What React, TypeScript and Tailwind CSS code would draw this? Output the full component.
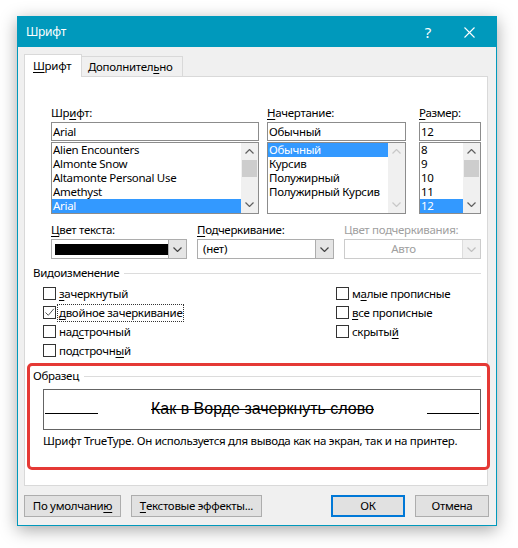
import React from "react";

const fontItems = ["Alien Encounters", "Almonte Snow", "Altamonte Personal Use", "Amethyst", "Arial"];
const styleItems = ["Обычный", "Курсив", "Полужирный", "Полужирный Курсив"];
const sizeItems = ["8", "9", "10", "11", "12"];

function U({ children }: { children: React.ReactNode }) {
  return <span className="underline decoration-1 underline-offset-[2px]">{children}</span>;
}

function Chevron({ up, className = "" }: { up?: boolean; className?: string }) {
  return (
    <svg width="9" height="5" viewBox="0 0 9 5" className={className}>
      <path
        d={up ? "M0.5 4.5 L4.5 0.5 L8.5 4.5" : "M0.5 0.5 L4.5 4.5 L8.5 0.5"}
        fill="none"
        stroke="currentColor"
        strokeWidth="1.2"
      />
    </svg>
  );
}

function TitleBar() {
  return (
    <div className="flex h-[30px] items-center bg-[#0099bc] pl-[8px] text-[12px] text-white">
      <span>Шрифт</span>
      <div className="ml-auto flex items-center">
        <span className="text-[15px]">?</span>
        <svg width="11" height="11" viewBox="0 0 11 11" className="ml-[33px] mr-[21px]">
          <path d="M0.5 0.5 L10.5 10.5 M10.5 0.5 L0.5 10.5" stroke="white" strokeWidth="1.1" />
        </svg>
      </div>
    </div>
  );
}

function Input({ value }: { value: string }) {
  return (
    <div className="mt-[1px] flex h-[19px] items-center border border-[#8c8c8c] bg-white pl-[1px]">
      {value}
    </div>
  );
}

function ScrollBar({ disabled }: { disabled?: boolean }) {
  const arrow = disabled ? "text-[#c8c8c8]" : "text-[#606060]";
  return (
    <div className="flex w-[17px] flex-col items-center bg-[#f0f0f0]">
      <div className={`flex h-[17px] w-full items-center justify-center ${arrow}`}>
        <Chevron up />
      </div>
      {disabled ? null : <div className="h-[17px] w-[15px] bg-[#cdcdcd]" />}
      <div className="flex-1" />
      <div className={`flex h-[17px] w-full items-center justify-center ${arrow}`}>
        <Chevron />
      </div>
    </div>
  );
}

function ListBox({
  items,
  selected,
  disabled,
}: {
  items: string[];
  selected: number;
  disabled?: boolean;
}) {
  return (
    <div className="mt-[1px] flex h-[72px] border border-[#8c8c8c] bg-white">
      <div className="min-w-0 flex-1 overflow-hidden">
        {items.map((item, i) => (
          <div
            key={item}
            className={
              i === selected
                ? "h-[14px] whitespace-nowrap bg-[#3399ff] pl-[1px] leading-[14px] text-white"
                : "h-[14px] whitespace-nowrap pl-[1px] leading-[14px]"
            }
          >
            {item}
          </div>
        ))}
      </div>
      <ScrollBar disabled={disabled} />
    </div>
  );
}

function Combo({
  width,
  children,
  disabled,
}: {
  width: string;
  children: React.ReactNode;
  disabled?: boolean;
}) {
  return (
    <div
      className={`mt-[1px] flex h-[20px] border ${width} ${
        disabled ? "border-[#cccccc] bg-white text-[#a0a0a0]" : "border-[#adadad] bg-white"
      }`}
    >
      <div className={`flex flex-1 items-center ${disabled ? "justify-center" : "pl-[5px]"}`}>{children}</div>
      <div
        className={`flex w-[18px] items-center justify-center border-l ${
          disabled ? "border-[#dddddd] bg-[#f0f0f0] text-[#c0c0c0]" : "border-[#adadad] bg-[#e5e5e5] text-[#444]"
        }`}
      >
        <Chevron />
      </div>
    </div>
  );
}

function GroupTitle({ children, left }: { children: React.ReactNode; left: string }) {
  return (
    <div className={`flex h-[16px] items-center ${left}`}>
      <span>{children}</span>
      <div className="ml-[5px] mr-[6px] h-px flex-1 bg-[#dcdcdc]" />
    </div>
  );
}

function Check({
  children,
  checked,
  focus,
}: {
  children: React.ReactNode;
  checked?: boolean;
  focus?: boolean;
}) {
  return (
    <div className="flex h-[19px] items-center">
      <div className="flex h-[13px] w-[13px] items-center justify-center border border-[#333333] bg-white">
        {checked ? (
          <svg width="11" height="11" viewBox="0 0 11 11">
            <path d="M1.5 5.5 L4.3 8.3 L9.8 1.8" fill="none" stroke="#555" strokeWidth="1" />
          </svg>
        ) : null}
      </div>
      <span
        className={`ml-[1px] h-[18px] whitespace-nowrap border px-[1px] ${
          focus ? "border-dotted border-[#333]" : "border-transparent"
        }`}
      >
        {children}
      </span>
    </div>
  );
}

function Button({ children, width, primary }: { children: React.ReactNode; width: string; primary?: boolean }) {
  return (
    <div
      className={`flex h-[22px] items-center justify-center whitespace-nowrap bg-[#e1e1e1] ${width} ${
        primary ? "border-2 border-[#0078d7]" : "border border-[#adadad]"
      }`}
    >
      {children}
    </div>
  );
}

export default function App() {
  return (
    <div className="h-[548px] w-[518px] bg-white pl-[17px] pt-[16px] font-['Noto_Sans',sans-serif] text-[11.5px] leading-[16px] tracking-[-0.3px] text-black">
      <div className="flex h-[510px] w-[480px] flex-col border border-[#0099bc] bg-[#f0f0f0] shadow-[0_4px_16px_rgba(0,0,0,0.35)]">
        <TitleBar />

        {/* tabs */}
        <div className="ml-[6px] mt-[7px] flex h-[22px] items-end">
          <div className="relative z-10 -mb-px flex h-[23px] w-[58px] items-center border border-b-0 border-[#d9d9d9] bg-white pl-[8px]">
            <span>
              <U>Ш</U>рифт
            </span>
          </div>
          <div className="flex h-[20px] w-[101px] items-center border border-b-0 border-l-0 border-[#d9d9d9] pl-[6px]">
            <span>
              Дополнител<U>ь</U>но
            </span>
          </div>
        </div>

        <div className="ml-[6px] h-[410px] w-[464px] border border-[#d9d9d9] bg-white">
          <div className="flex pl-[26px] pt-[28px]">
            <div className="w-[208px]">
              <div className="h-[16px]">
                Шр<U>и</U>фт:
              </div>
              <Input value="Arial" />
              <ListBox items={fontItems} selected={4} />
            </div>
            <div className="ml-[8px] w-[139px]">
              <div className="h-[16px]">
                <U>Н</U>ачертание:
              </div>
              <Input value="Обычный" />
              <ListBox items={styleItems} selected={0} disabled />
            </div>
            <div className="ml-[13px] w-[62px]">
              <div className="h-[16px]">
                <U>Р</U>азмер:
              </div>
              <Input value="12" />
              <ListBox items={sizeItems} selected={4} />
            </div>
          </div>

          <div className="mt-[8px] flex gap-[10px] pl-[26px]">
            <div>
              <div className="h-[16px]">
                <U>Ц</U>вет текста:
              </div>
              <Combo width="w-[136px]">
                <div className="-ml-[2px] h-[11px] w-[113px] bg-black" />
              </Combo>
            </div>
            <div>
              <div className="h-[16px]">
                <U>П</U>одчеркивание:
              </div>
              <Combo width="w-[137px]">(нет)</Combo>
            </div>
            <div>
              <div className="h-[16px] text-[#a0a0a0]">Цвет подчеркивания:</div>
              <Combo width="w-[137px]" disabled>
                Авто
              </Combo>
            </div>
          </div>

          <div className="mt-[6px]">
            <GroupTitle left="pl-[8px]">Видоизменение</GroupTitle>
          </div>

          <div className="mt-[3px] flex pl-[18px]">
            <div className="w-[293px]">
              <Check>
                <U>з</U>ачеркнутый
              </Check>
              <Check checked focus>
                <U>д</U>войное зачеркивание
              </Check>
              <Check>
                над<U>с</U>трочный
              </Check>
              <Check>
                подстрочн<U>ы</U>й
              </Check>
            </div>
            <div>
              <Check>
                м<U>а</U>лые прописные
              </Check>
              <Check>
                <U>в</U>се прописные
              </Check>
              <Check>
                скрыты<U>й</U>
              </Check>
            </div>
          </div>

          <div className="ml-[2px] mt-[3px] h-[107px] w-[463px] rounded-[5px] border-[3px] border-[#e53935]">
            <div className="mt-[2px]">
              <GroupTitle left="pl-[3px]">Образец</GroupTitle>
            </div>
            <div className="ml-[13px] mt-[5px] flex h-[41px] w-[438px] items-baseline border border-[#646464] px-[1px] pt-[10px] font-['Liberation_Sans',sans-serif] text-[16px] leading-[18px] tracking-normal">
              <div className="h-px w-[53px] bg-black" />
              <div className="flex-1 text-center line-through decoration-1">Как в Ворде зачеркнуть слово</div>
              <div className="h-px w-[52px] bg-black" />
            </div>
            <div className="ml-[13px] mt-[3px] whitespace-nowrap">
              Шрифт TrueType. Он используется для вывода как на экран, так и на принтер.
            </div>
          </div>
        </div>

        <div className="ml-[6px] mt-[9px] flex">
          <Button width="w-[97px]">
            По умолчани<U>ю</U>
          </Button>
          <Button width="ml-[10px] w-[131px]">
            <U>Т</U>екстовые эффекты...
          </Button>
          <Button width="ml-[69px] w-[74px]" primary>
            ОК
          </Button>
          <Button width="ml-[10px] w-[74px]">Отмена</Button>
        </div>
      </div>
    </div>
  );
}
